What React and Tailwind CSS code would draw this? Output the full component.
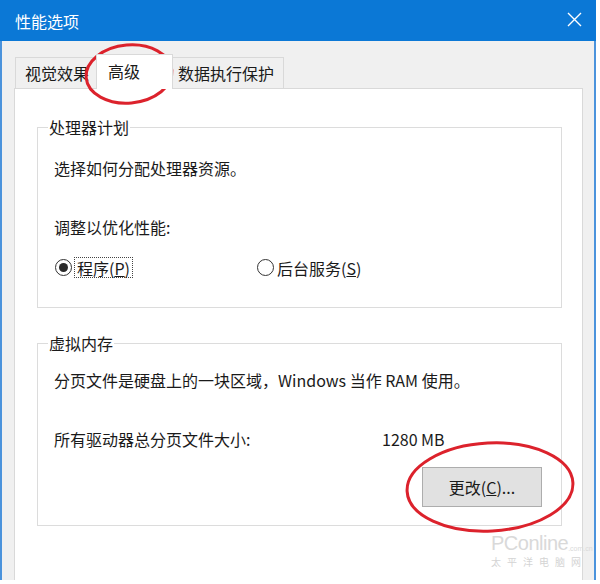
import * as React from 'react';

function Radio({ checked }) {
  return (
    <span className="w-[17px] h-[17px] shrink-0 rounded-full border border-[#333333] bg-white flex items-center justify-center">
      {checked && <span className="w-[9px] h-[9px] rounded-full bg-[#2a2a2a]" />}
    </span>
  );
}

export default function App() {
  return (
    <div className="relative w-[600px] h-[584px] bg-white font-['Noto_Sans_CJK_SC',sans-serif] text-[16px] leading-[20px] text-[#1a1a1a]">
      <div className="w-[596px] h-[580px] flex flex-col">
        {/* title bar */}
        <div className="h-[41px] shrink-0 bg-[#0b78d6] flex items-center justify-between pl-[15px] pr-[14px] text-white">
          <span>性能选项</span>
          <svg width="15" height="15" viewBox="0 0 15 15" className="-mt-[2px]">
            <path d="M1 1 L14 14 M14 1 L1 14" stroke="white" strokeWidth="1.4" fill="none" />
          </svg>
        </div>

        {/* body */}
        <div className="flex-1 flex flex-col bg-[#f0f0f0] border-x-2 border-[#4b93dc] pl-[12px] pr-[11px] pt-[13px]">
          {/* tabs */}
          <div className="flex items-end h-[35px] pl-[1px]">
            <div className="w-[82px] h-[32px] border border-b-0 border-[#d9d9d9] bg-[#f0f0f0] pl-[9px] pb-[2px] flex items-center">
              视觉效果
            </div>
            <div className="relative z-10 -ml-px w-[77px] h-[35px] border border-b-0 border-[#d9d9d9] bg-white pl-[11px] pb-[3px] flex items-center">
              高级
            </div>
            <div className="-ml-px w-[112px] h-[32px] border border-b-0 border-[#d9d9d9] bg-[#f0f0f0] pl-[5px] pb-[2px] flex items-center">
              数据执行保护
            </div>
          </div>

          {/* panel */}
          <div className="-mt-px flex-1 bg-white border border-b-0 border-[#d9d9d9] pl-[22px] pr-[20px]">
            <fieldset className="mt-[28px] border border-[#dcdcdc]">
              <legend className="ml-[10px] px-[1px]">处理器计划</legend>
              <div className="pl-[16px] pt-[21px] pb-[29px]">
                <div>选择如何分配处理器资源。</div>
                <div className="mt-[39px]">调整以优化性能:</div>
                <div className="mt-[20px] h-[21px] flex items-center">
                  <span className="ml-px">
                    <Radio checked />
                  </span>
                  <span className="ml-[2px] h-[21px] border border-dotted border-[#444] px-[2px] flex items-center">
                    程序(<u>P</u>)
                  </span>
                  <span className="ml-[124px]">
                    <Radio />
                  </span>
                  <span className="h-[21px] border border-transparent px-[2px] flex items-center">
                    后台服务(<u>S</u>)
                  </span>
                </div>
              </div>
            </fieldset>

            <fieldset className="mt-[25px] border border-[#dcdcdc]">
              <legend className="ml-[10px] px-[1px]">虚拟内存</legend>
              <div className="pl-[16px] pr-[19px] pt-[17px] pb-[18px]">
                <div>分页文件是硬盘上的一块区域，Windows 当作 RAM 使用。</div>
                <div className="mt-[39px] flex">
                  <span className="w-[328px]">所有驱动器总分页文件大小:</span>
                  <span>1280 MB</span>
                </div>
                <div className="mt-[18px] flex justify-end">
                  <button className="w-[120px] h-[40px] bg-[#e1e1e1] border border-[#adadad] flex items-center justify-center">
                    更改(<u>C</u>)...
                  </button>
                </div>
              </div>
            </fieldset>
          </div>
        </div>
      </div>

      {/* red annotation ellipses */}
      <svg className="absolute inset-0 pointer-events-none" width="600" height="584" viewBox="0 0 600 584">
        <ellipse cx="129" cy="74" rx="43" ry="29" transform="rotate(-5 129 74)" fill="none" stroke="#dc222c" strokeWidth="3" />
        <ellipse cx="490" cy="487" rx="83" ry="44" transform="rotate(-3 490 487)" fill="none" stroke="#dc222c" strokeWidth="3" />
      </svg>

      {/* watermark */}
      <div className="absolute left-[491px] top-[533px] flex flex-col items-start pointer-events-none">
        <div className="flex items-end h-[20px]">
          <span className="font-['Liberation_Sans',sans-serif] text-[20px] leading-[20px] text-[#d9d9d9] tracking-[-0.5px]">PConline</span>
          <span className="font-['Liberation_Sans',sans-serif] text-[7px] leading-[8px] text-[#d9d9d9]">.com.cn</span>
        </div>
        <span className="mt-[3px] text-[10px] leading-[12px] text-[#d4d4d4] tracking-[6px]">太平洋电脑网</span>
      </div>
    </div>
  );
}
